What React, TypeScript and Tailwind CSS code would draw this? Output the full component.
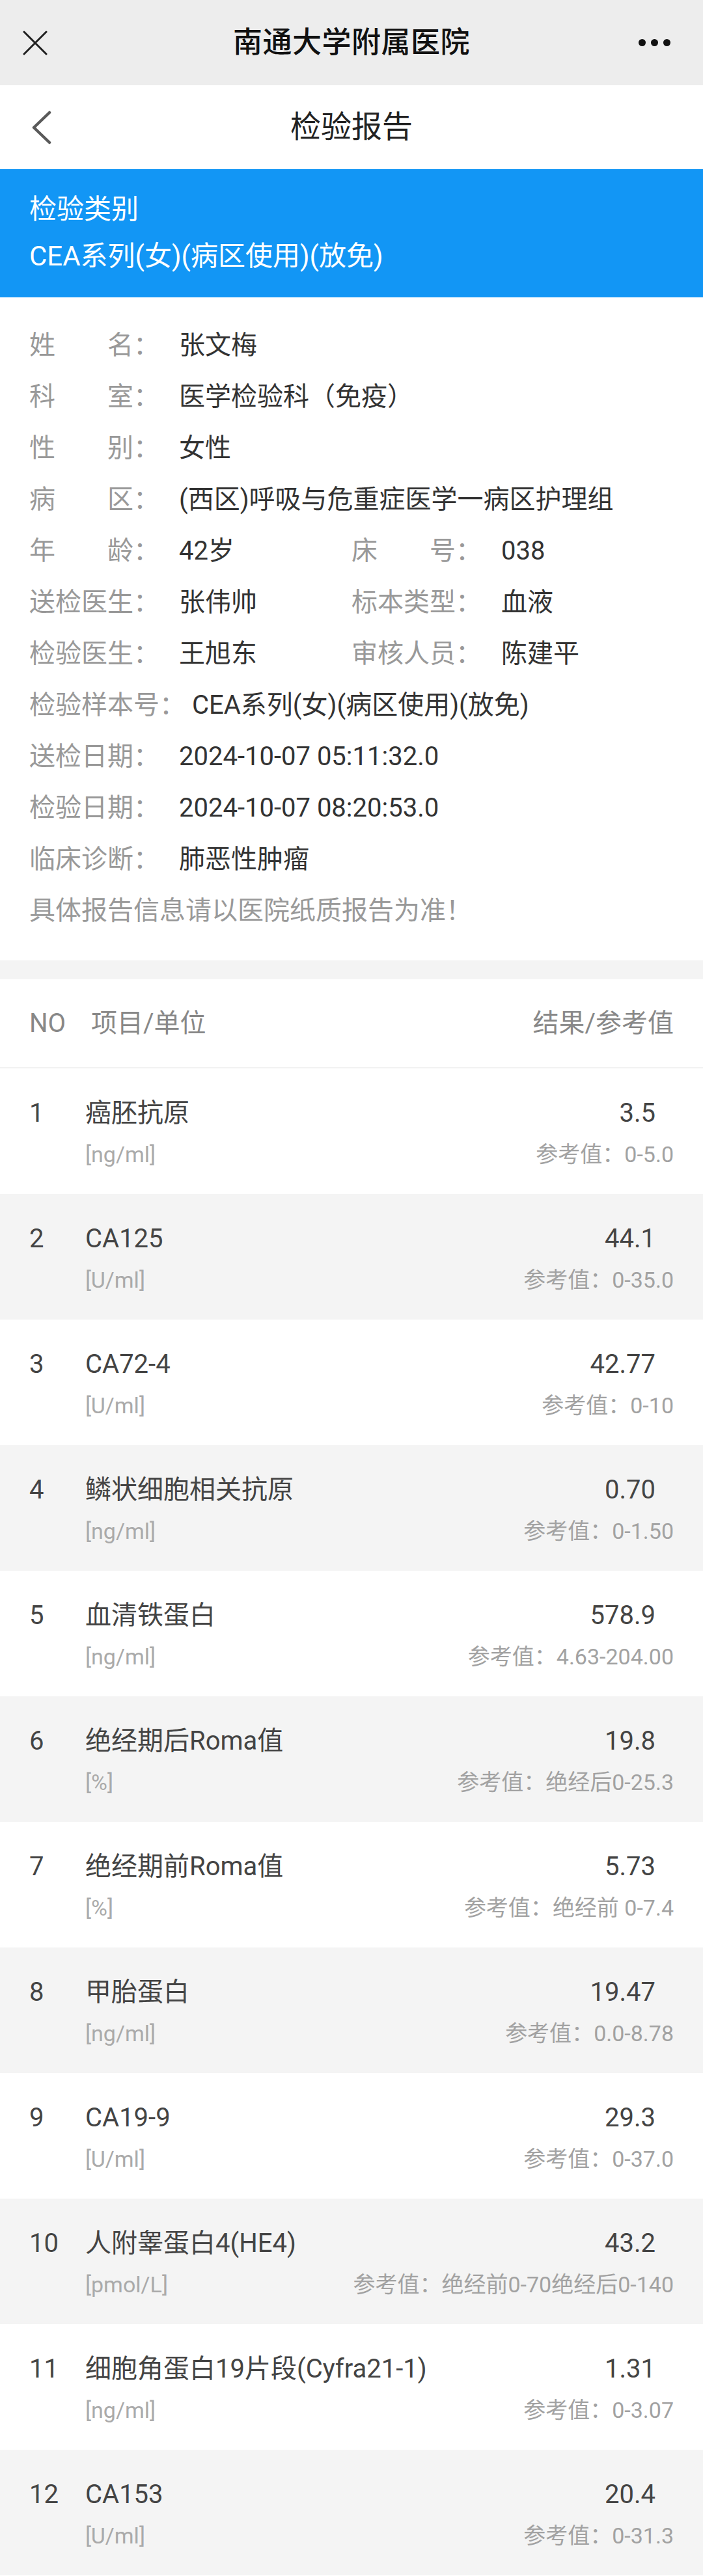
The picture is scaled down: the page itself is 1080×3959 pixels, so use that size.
import { ReactNode } from "react";

const InfoLabel = ({ text }: { text: string }) => {
  // two-char labels are spread over the width of four chars + colon
  if (text.length === 2) {
    return (
      <div className="flex justify-between w-[200px] min-w-[220px] pr-[20px] mr-[10px] text-[#999]">
        <span>{text[0]}</span>
        <span>{text[1]}：</span>
      </div>
    );
  }
  return (
    <div className="min-w-[220px] mr-[10px] text-[#999] whitespace-nowrap">
      {text}：
    </div>
  );
};

const InfoRow = ({ children }: { children: ReactNode }) => (
  <div className="flex items-center h-[79px] leading-[79px] whitespace-nowrap">
    {children}
  </div>
);

const Pair = ({ label, value, wide }: { label: string; value: string; wide?: boolean }) => (
  <div className={`flex ${wide ? "" : "w-[497px]"}`}>
    <InfoLabel text={label} />
    <div className="text-[#333]">{value}</div>
  </div>
);

const App = () => {
  return (
    <div className="w-[1080px] min-h-[3959px] bg-white font-[Roboto,'Noto_Sans_CJK_SC',sans-serif]">
      {/* wechat bar */}
      <div className="h-[131px] bg-[#ededed] flex items-center px-[35px]">
        <div className="w-[100px] flex items-center">
          <svg width="38" height="38" viewBox="0 0 38 38">
            <path d="M2 2 L36 36 M36 2 L2 36" stroke="#1f1f1f" strokeWidth="3" strokeLinecap="round" fill="none" />
          </svg>
        </div>
        <div className="flex-1 text-center text-[45px] font-medium text-[#111] tracking-[0.5px]">
          南通大学附属医院
        </div>
        <div className="w-[100px] flex items-center justify-end gap-[8px] pr-[15px]">
          <span className="w-[11px] h-[11px] rounded-full bg-[#111]" />
          <span className="w-[11px] h-[11px] rounded-full bg-[#111]" />
          <span className="w-[11px] h-[11px] rounded-full bg-[#111]" />
        </div>
      </div>

      {/* page header */}
      <div className="h-[129px] bg-white flex items-center px-[48px]">
        <div className="w-[100px]">
          <svg width="32" height="52" viewBox="0 0 32 52">
            <polyline points="28,3 4,26 28,49" stroke="#5a5a5a" strokeWidth="4.5" strokeLinecap="round" strokeLinejoin="round" fill="none" />
          </svg>
        </div>
        <div className="flex-1 text-center text-[47px] text-[#222]">检验报告</div>
        <div className="w-[100px]" />
      </div>

      {/* category banner */}
      <div className="bg-[#1296f5] text-white text-[42px] leading-[72px] px-[45px] pt-[26px] pb-[27px]">
        <div>检验类别</div>
        <div>CEA系列(女)(病区使用)(放免)</div>
      </div>

      {/* patient info */}
      <div className="px-[45px] pt-[34px] pb-[37px] text-[40px]">
        <InfoRow>
          <Pair label="姓名" value="张文梅" />
        </InfoRow>
        <InfoRow>
          <Pair label="科室" value="医学检验科（免疫）" wide />
        </InfoRow>
        <InfoRow>
          <Pair label="性别" value="女性" />
        </InfoRow>
        <InfoRow>
          <Pair label="病区" value="(西区)呼吸与危重症医学一病区护理组" wide />
        </InfoRow>
        <InfoRow>
          <Pair label="年龄" value="42岁" />
          <Pair label="床号" value="038" />
        </InfoRow>
        <InfoRow>
          <Pair label="送检医生" value="张伟帅" />
          <Pair label="标本类型" value="血液" />
        </InfoRow>
        <InfoRow>
          <Pair label="检验医生" value="王旭东" />
          <Pair label="审核人员" value="陈建平" />
        </InfoRow>
        <InfoRow>
          <Pair label="检验样本号" value="CEA系列(女)(病区使用)(放免)" wide />
        </InfoRow>
        <InfoRow>
          <Pair label="送检日期" value="2024-10-07 05:11:32.0" wide />
        </InfoRow>
        <InfoRow>
          <Pair label="检验日期" value="2024-10-07 08:20:53.0" wide />
        </InfoRow>
        <InfoRow>
          <Pair label="临床诊断" value="肺恶性肿瘤" wide />
        </InfoRow>
        <InfoRow>
          <div className="text-[#999]">具体报告信息请以医院纸质报告为准！</div>
        </InfoRow>
      </div>

      <div className="h-[29px] bg-[#f4f4f4]" />

      {/* results table */}
      <div className="h-[137px] flex items-center px-[45px] text-[40px] text-[#888] border-b-2 border-[#f2f2f2]">
        <div className="w-[95px]">NO</div>
        <div className="flex-1">项目/单位</div>
        <div>结果/参考值</div>
      </div>

      {results.map((r, i) => (
        <div
          key={r.no}
          className={`h-[193px] flex px-[45px] pt-[41px] ${i % 2 === 1 ? "bg-[#f4f4f4]" : "bg-white"}`}
        >
          <div className="w-[86px] text-[40px] leading-[56px] text-[#444]">{r.no}</div>
          <div className="flex-1 min-w-0">
            <div className="flex justify-between text-[40px] leading-[56px] text-[#444] whitespace-nowrap">
              <span>{r.name}</span>
              <span className="pr-[28px]">{r.value}</span>
            </div>
            <div className="flex justify-between mt-[13px] text-[34px] leading-[44px] whitespace-nowrap">
              <span className="text-[#aaa]">{r.unit}</span>
              <span className="text-[#a2a2a2]">参考值：{r.ref}</span>
            </div>
          </div>
        </div>
      ))}
    </div>
  );
};

export default App;

const results = [
  { no: 1, name: "癌胚抗原", unit: "[ng/ml]", value: "3.5", ref: "0-5.0" },
  { no: 2, name: "CA125", unit: "[U/ml]", value: "44.1", ref: "0-35.0" },
  { no: 3, name: "CA72-4", unit: "[U/ml]", value: "42.77", ref: "0-10" },
  { no: 4, name: "鳞状细胞相关抗原", unit: "[ng/ml]", value: "0.70", ref: "0-1.50" },
  { no: 5, name: "血清铁蛋白", unit: "[ng/ml]", value: "578.9", ref: "4.63-204.00" },
  { no: 6, name: "绝经期后Roma值", unit: "[%]", value: "19.8", ref: "绝经后0-25.3" },
  { no: 7, name: "绝经期前Roma值", unit: "[%]", value: "5.73", ref: "绝经前 0-7.4" },
  { no: 8, name: "甲胎蛋白", unit: "[ng/ml]", value: "19.47", ref: "0.0-8.78" },
  { no: 9, name: "CA19-9", unit: "[U/ml]", value: "29.3", ref: "0-37.0" },
  { no: 10, name: "人附睾蛋白4(HE4)", unit: "[pmol/L]", value: "43.2", ref: "绝经前0-70绝经后0-140" },
  { no: 11, name: "细胞角蛋白19片段(Cyfra21-1)", unit: "[ng/ml]", value: "1.31", ref: "0-3.07" },
  { no: 12, name: "CA153", unit: "[U/ml]", value: "20.4", ref: "0-31.3" },
];
